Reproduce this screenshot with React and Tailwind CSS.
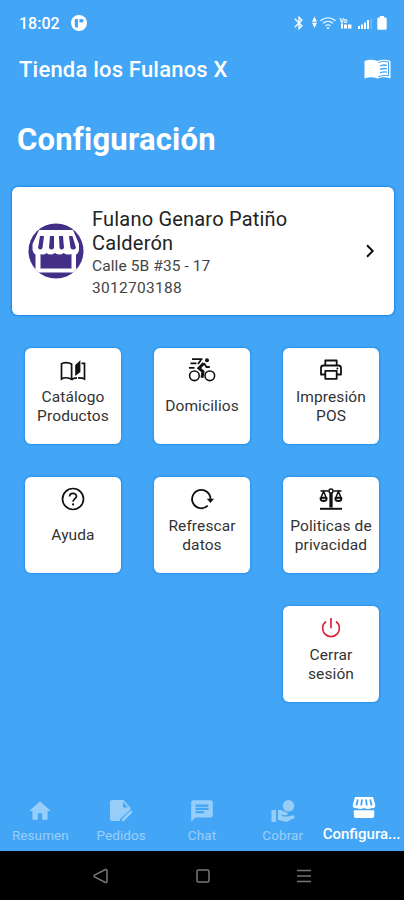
import { MdBluetooth, MdChat, MdHome } from 'react-icons/md';

function CatalogIcon() {
    return (
        <svg className="h-6 w-7" viewBox="0 0 28 24" fill="none" stroke="currentColor" strokeWidth="1.7">
            <path d="M2.5 21V5.9C4.2 4.2 9 4 12.6 6V21.3C9.5 19.3 5 19.3 2.5 21Z" />
            <path d="M12.6 21.3C14.4 20.1 16 19.9 18 19.8M22.5 5.3H25.5V21C24 20 22 19.7 19 19.8" />
            <path d="M16.2 7L21.4 2.2V14L16.2 18Z" fill="currentColor" stroke="none" />
        </svg>
    );
}

function BikeIcon() {
    return (
        <svg className="h-7 w-7" viewBox="0 0 28 28" fill="none" stroke="currentColor" strokeWidth="1.6">
            <circle cx="6.4" cy="19.8" r="4.8" />
            <circle cx="21.8" cy="19.8" r="4.8" />
            <circle cx="19" cy="4.2" r="2" fill="currentColor" stroke="none" />
            <path d="M4 3.1H14.5M2.5 7.3H8.5M1 11.8H6.5" strokeWidth="1.7" />
            <path d="M15.8 7.2L11 12.2L15 15.6L14 21.8" strokeWidth="3" />
            <path d="M13 4L10 8M16 7.2L18.5 11H21.8" strokeWidth="1.8" />
        </svg>
    );
}

function PrinterIcon() {
    return (
        <svg className="h-6 w-6" viewBox="0 0 24 24" fill="none" stroke="currentColor" strokeWidth="1.8" strokeLinejoin="round">
            <path d="M6.3 7.5V2.5H17.7V7.5" />
            <path d="M6 16.5H2V10Q2 7.5 4.5 7.5H19.5Q22 7.5 22 10V16.5H18" />
            <rect x="6.3" y="12.8" width="11.4" height="8" />
            <circle cx="18.4" cy="10.6" r="1" fill="currentColor" stroke="none" />
        </svg>
    );
}

function HelpIcon() {
    return (
        <svg className="h-6 w-6" viewBox="0 0 24 24" fill="none" stroke="currentColor" strokeWidth="1.7">
            <circle cx="12" cy="12" r="10.5" />
            <path d="M8.6 9.6C8.6 5.2 15.5 5.4 15.5 9.3C15.5 11.8 12.1 11.6 12.1 14.8" />
            <circle cx="12.1" cy="17.4" r="1.1" fill="currentColor" stroke="none" />
        </svg>
    );
}

function RefreshIcon() {
    return (
        <svg className="h-6 w-6" viewBox="0 0 24 24" fill="none" stroke="currentColor" strokeWidth="1.8">
            <path d="M17.8 18.6A9.2 9.2 0 1 1 20.5 12.5" />
            <path d="M16.8 11.8H24L20.5 16Z" fill="currentColor" stroke="none" />
        </svg>
    );
}

function ScalesIcon() {
    return (
        <svg className="h-6 w-6" viewBox="0 0 24 24" fill="none" stroke="currentColor" strokeWidth="1.5">
            <path d="M1.5 4H9.5M14.5 4H22.5M11.2 6V20.5M12.8 6V20.5" strokeWidth="1.7" />
            <circle cx="12" cy="4" r="2" />
            <path d="M1 21.8H23" strokeWidth="2" />
            <path d="M4.6 4.5L2 10.5H7.2Z M19.4 4.5L16.8 10.5H22Z" />
            <path d="M0.6 10.4H8.6Q8.8 15 4.6 15T0.6 10.4Z M15.4 10.4H23.4Q23.6 15 19.4 15T15.4 10.4Z" fill="currentColor" stroke="none" />
            <path d="M2.8 12.3H6.4M17.6 12.3H21.2" stroke="#fff" strokeWidth="1" />
        </svg>
    );
}

function PowerIcon() {
    return (
        <svg className="h-6 w-6 text-[#dc2439]" viewBox="0 0 24 24" fill="none" stroke="currentColor" strokeWidth="1.7">
            <path d="M7 5.5A8.4 8.4 0 1 0 17 5.5M12 2V12.2" />
        </svg>
    );
}

function StoreBadge() {
    return (
        <svg className="h-14 w-14 shrink-0" viewBox="0 0 56 56">
            <clipPath id="badge">
                <circle cx="28" cy="28" r="27.5" />
            </clipPath>
            <g clipPath="url(#badge)">
                <rect width="56" height="56" fill="#432f87" />
                <path d="M11 7H45L51 21V27Q50 31 48 31.5V45.5H51V49.5H5V45.5H7.5V31.5Q5 30 4.5 27V21Z" fill="#fff" />
                <path d="M12.5 31Q16 32.5 18.5 30Q22 33 27 30Q32 33 35.5 30Q39 32.5 43.5 31V45.5H12.5Z" fill="#432f87" />
                <path d="M12 13H16L14.5 25Q12.5 28 10 25ZM22 13H26V25Q23.5 28 21 25ZM31 13H35L36 25Q33.5 28 31.5 25ZM41 13H44.5L48 25Q45 28 42.5 25Z" fill="#432f87" />
            </g>
        </svg>
    );
}

function MenuBookIcon() {
    return (
        <svg className="h-[22px] w-[27px]" viewBox="0 0 27 22">
            <path d="M.5 3Q7 .3 13.5 3Q20 .3 26.5 3V20.5Q20 18 13.5 20.5Q7 18 .5 20.5Z" fill="#fff" />
            <path d="M14.3 4.5Q20 2.2 24.5 4V17.6Q20 16.4 14.3 18.6" fill="none" stroke="#42a5f5" strokeWidth="1" />
            <path d="M16 8Q20 6.5 23 7.3M16 11.4Q20 10 23 10.8M16 14.8Q20 13.4 23 14.2" fill="none" stroke="#42a5f5" strokeWidth="1.3" />
        </svg>
    );
}

function OrderIcon() {
    return (
        <svg className="h-6 w-6" viewBox="0 0 24 24" fill="currentColor">
            <path d="M3 1H14.5L21.5 9V10.5L11 20V22H3Q1 22 1 20V3Q1 1 3 1Z" />
            <path d="M14 3V8.5H19Z" fill="#42a5f5" />
            <path d="M12.5 20L20.5 12L22 10.8L24 13L15 22.5H12.5Z" stroke="#42a5f5" strokeWidth=".8" />
        </svg>
    );
}

function ChargeIcon() {
    return (
        <svg className="h-6 w-6" viewBox="0 0 24 24" fill="currentColor">
            <circle cx="17.5" cy="6.8" r="5.8" />
            <path d="M.5 11H5V23H.5ZM7 11H9.5L16 13.5Q17.5 15 16 16.3H12.5L10.8 15.6L10.5 16.5L12.5 17.5H17L22 16.2Q24 17 23.6 19L15.5 23L7 21Z" />
        </svg>
    );
}

function StoreIcon() {
    return (
        <svg className="h-6 w-6" viewBox="0 0 24 24" fill="currentColor">
            <path d="M3 1H21L23.3 9Q23 13 19.5 12Q16.5 14 12 12Q8 14 5 12Q1 13 .7 9Z" />
            <path d="M5.8 3.5L4.3 9.5M10 3.5L9.2 9.5M14 3.5L14.8 9.5M18.2 3.5L19.7 9.5" stroke="#42a5f5" strokeWidth="1.8" />
            <path d="M1.8 14.2H22.2V20Q22.2 22 20.2 22H3.8Q1.8 22 1.8 20Z" />
        </svg>
    );
}

function StatusIcons() {
    return (
        <div className="flex items-center text-white">
            <MdBluetooth className="h-4 w-4" />
            <svg className="h-4 w-[70px]" viewBox="0 0 70 16" fill="currentColor">
                <path d="M7.5 1.5L10 6.8H5ZM7.5 13L10 7.8H5Z" />
                <g fill="none" stroke="currentColor" strokeWidth="1.1">
                    <path d="M13.5 5.8Q21 -.2 28.5 5.8M16 8.3Q21 4.2 26 8.3M18.5 10.7Q21 8.8 23.5 10.7" />
                </g>
                <path d="M19.5 12.2H22.5L21 14.4Z" />
                <text x="32.5" y="8" fontSize="6.5" fontWeight="700" fontFamily="Roboto, sans-serif">Vo</text>
                <path d="M34 8.5H36V13.5H34ZM37 9.5H40V13.5H37ZM41 9.5H44.5V13.5H41Z" />
                <path d="M51 11H53V14H51ZM54 9.5H56V14H54ZM57 7.5H59V14H57ZM60 5H62V14H60Z" />
                <path d="M63.5 3.5H65V14H63.5Z" opacity=".25" />
            </svg>
            <svg className="h-4 w-2.5" viewBox="0 0 10 16" fill="currentColor">
                <path d="M3 1H7V2.5H8.5Q9.7 2.5 9.7 3.7V13.5Q9.7 14.7 8.5 14.7H1.5Q.3 14.7 .3 13.5V3.7Q.3 2.5 1.5 2.5H3Z" />
            </svg>
        </div>
    );
}

const options = [
    { label: 'Catálogo Productos', icon: <CatalogIcon /> },
    { label: 'Domicilios', icon: <BikeIcon /> },
    { label: 'Impresión POS', icon: <PrinterIcon /> },
    { label: 'Ayuda', icon: <HelpIcon /> },
    { label: 'Refrescar datos', icon: <RefreshIcon /> },
    { label: 'Politicas de privacidad', icon: <ScalesIcon /> },
    { label: 'Cerrar sesión', icon: <PowerIcon />, last: true },
];

const tabs = [
    { label: 'Resumen', icon: <MdHome className="h-[26px] w-[26px]" /> },
    { label: 'Pedidos', icon: <OrderIcon /> },
    { label: 'Chat', icon: <MdChat className="h-[26px] w-[26px]" /> },
    { label: 'Cobrar', icon: <ChargeIcon /> },
];

function App() {
    return (
        <div className="flex h-[900px] w-[404px] flex-col overflow-hidden bg-[#42a5f5] font-[Roboto,sans-serif]">
            {/* Status bar */}
            <div className="flex h-[46px] shrink-0 items-center justify-between pl-[19px] pr-[17px] text-white">
                <div className="flex items-center gap-3">
                    <span className="w-10 pt-0.5 text-base font-medium">18:02</span>
                    <svg className="h-4 w-4" viewBox="0 0 16 16">
                        <circle cx="8" cy="8" r="8" fill="#fff" />
                        <path d="M3.8 4H7V12.5H4.8Q3.8 12 3.8 10.5ZM8.4 4H11Q12.6 4 12.6 5.8T11 7.6H8.4Z" fill="#42a5f5" />
                    </svg>
                </div>
                <StatusIcons />
            </div>

            {/* App bar */}
            <div className="flex h-[46px] shrink-0 items-center justify-between pl-[19px] pr-[13px] text-white">
                <span className="text-[22px] font-medium tracking-[0.2px]">Tienda los Fulanos X</span>
                <MenuBookIcon />
            </div>

            <h1 className="mt-7 h-10 pl-[17px] text-[31px] leading-10 font-bold tracking-[0.2px] text-white">Configuración</h1>

            {/* Profile */}
            <div className="mx-3 mt-[27px] mr-2.5 flex h-32 shrink-0 items-center rounded-md bg-white pl-4 shadow-[0_0_2px_1px_#1e88e5]">
                <StoreBadge />
                <div className="ml-2 flex-1 pt-[3px] text-[#222]">
                    <p className="w-56 text-xl leading-6 tracking-[0.2px]">Fulano Genaro Patiño Calderón</p>
                    <p className="text-[15.5px] leading-[23px] tracking-[0.1px] text-[#444]">Calle 5B #35 - 17</p>
                    <p className="text-[15.5px] leading-5 tracking-[0.3px] text-[#444]">3012703188</p>
                </div>
                <svg className="mr-4 h-4 w-4" viewBox="0 0 16 16" fill="none" stroke="#111" strokeWidth="2">
                    <path d="M5 2.3L10.7 8L5 13.7" />
                </svg>
            </div>

            {/* Options */}
            <div className="mt-[33px] grid grid-cols-[96px_96px_96px] gap-[33px] pl-[25px]">
                {options.map((option) => (
                    <button
                        key={option.label}
                        className={`flex h-24 w-24 flex-col items-center rounded-md bg-white pt-2 text-[#111] shadow-[0_0_2px_1px_#2b93ea] ${option.last ? 'col-start-3' : ''}`}
                    >
                        <span className="flex h-[27px] items-center">{option.icon}</span>
                        <span className="flex h-[47px] items-center px-1 text-[15.5px] leading-[18.5px] tracking-[0.1px] text-[#333]">
                            {option.label}
                        </span>
                    </button>
                ))}
            </div>

            {/* Tabs */}
            <nav className="mt-auto flex h-[67px] shrink-0 text-white">
                {tabs.map((tab) => (
                    <div key={tab.label} className="flex w-[20%] flex-col items-center pt-3.5 opacity-45">
                        <span className="flex h-[26px] items-center">{tab.icon}</span>
                        <span className="mt-[3px] text-[13.5px] leading-4 tracking-[0.1px]">{tab.label}</span>
                    </div>
                ))}
                <div className="flex w-[20%] flex-col items-center pt-[11px]">
                    <span className="flex h-[26px] items-center"><StoreIcon /></span>
                    <span className="mt-[5px] mr-1 text-[15px] leading-4 font-medium whitespace-nowrap">Configura...</span>
                </div>
            </nav>

            {/* System navigation */}
            <div className="flex h-[49px] shrink-0 items-center justify-center bg-black text-[#777]">
                <svg className="h-4 w-[220px]" viewBox="0 0 220 16" fill="none" stroke="currentColor" strokeWidth="1.5">
                    <path d="M13.5 1.5Q15 1 15 2.5V13.5Q15 15 13.5 14.5L2.5 9Q1.5 8 2.5 7Z" />
                    <rect x="105" y="2" width="12" height="12" rx="1.5" />
                    <path d="M205 2.5H219M205 8H219M205 13.5H219" />
                </svg>
            </div>
        </div>
    );
}

export default App;
